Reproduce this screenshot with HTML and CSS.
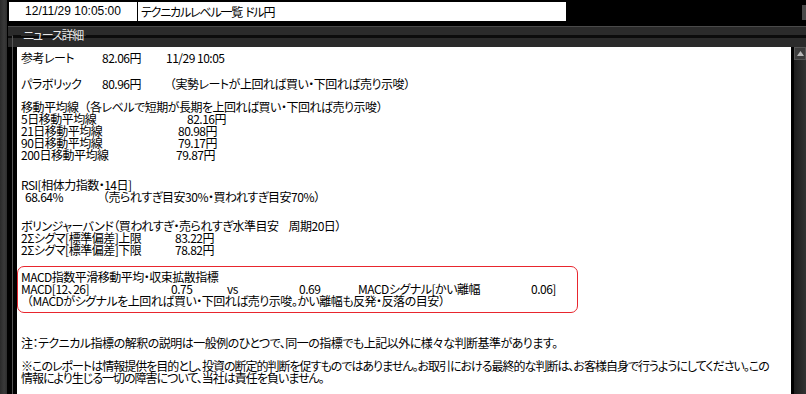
FILE: index.html
```html
<!DOCTYPE html>
<html lang="ja">
<head>
<meta charset="utf-8">
<title>テクニカルレベル一覧 ドル円</title>
<link rel="stylesheet" href="styles.css">
</head>
<body>
<div class="app">
  <div class="strip"></div>
  <div class="main">
    <div class="titlebar">
      <div class="datebox">12/11/29 10:05:00</div>
      <div class="titlebox">テクニカルレベル一覧&nbsp;&nbsp;ドル円</div>
      <div class="filler"></div>
      <div class="nub"></div>
    </div>
    <fieldset class="group">
      <legend class="legend">ニュース詳細</legend>
      <div class="panel-row">
        <div class="content">
          <div class="blk b-ref">
            <div class="ln"><span class="col w-lab">参考レート</span><span class="col w-val">82.06円</span><span>11/29 10:05</span></div>
          </div>
          <div class="blk b-para">
            <div class="ln"><span class="col w-lab">パラボリック</span><span class="col w-val2">80.96円</span><span><span class="fw">（</span>実勢レートが上回れば買い・下回れば売り示唆<span class="fw">）</span></span></div>
          </div>
          <div class="blk b-ma">
            <div class="ln">移動平均線<span class="fw">（</span>各レベルで短期が長期を上回れば買い・下回れば売り示唆<span class="fw">）</span></div>
            <div class="ln"><span class="col w-ma5">5日移動平均線</span><span>82.16円</span></div>
            <div class="ln"><span class="col w-ma21">21日移動平均線</span><span>80.98円</span></div>
            <div class="ln"><span class="col w-ma21">90日移動平均線</span><span>79.17円</span></div>
            <div class="ln"><span class="col w-ma200">200日移動平均線</span><span>79.87円</span></div>
          </div>
          <div class="blk b-rsi">
            <div class="ln">RSI[相体力指数・14日]</div>
            <div class="ln indent"><span class="col w-rsi">68.64%</span><span><span class="fw">（</span>売られすぎ目安30%・買われすぎ目安70%<span class="fw">）</span></span></div>
          </div>
          <div class="blk b-bb">
            <div class="ln">ボリンジャーバンド（買われすぎ・売られすぎ水準目安<span class="gap"></span>周期20日）</div>
            <div class="ln"><span class="col w-bb">2Σシグマ[標準偏差]上限</span><span>83.22円</span></div>
            <div class="ln"><span class="col w-bb">2Σシグマ[標準偏差]下限</span><span>78.82円</span></div>
          </div>
          <div class="blk b-macd">
            <div class="ln">MACD指数平滑移動平均・収束拡散指標</div>
            <div class="ln"><span class="col w-m1">MACD[12、26]</span><span class="col w-m2">0.75</span><span class="col w-m3">vs</span><span class="col w-m4">0.69</span><span class="col w-m5">MACDシグナル[かい離幅</span><span>0.06]</span></div>
            <div class="ln"><span class="fw">（</span>MACDがシグナルを上回れば買い・下回れば売り示唆。かい離幅も反発・反落の目安<span class="fw">）</span></div>
          </div>
          <div class="blk b-note">
            <div class="ln">注：テクニカル指標の解釈の説明は一般例のひとつで、同一の指標でも上記以外に様々な判断基準があります。</div>
          </div>
          <div class="blk b-disc">
            <div class="ln tight">※このレポートは情報提供を目的とし、投資の断定的判断を促すものではありません。お取引における最終的な判断は、お客様自身で行うようにしてください。この</div>
            <div class="ln tight">情報により生じる一切の障害について、当社は責任を負いません。</div>
          </div>
        </div>
        <div class="scrollbar">
          <div class="up-btn"><svg width="9" height="7" viewBox="0 0 9 7"><polygon points="4.5,1 8,6 1,6" fill="#b8b8b8"/></svg></div>
        </div>
      </div>
    </fieldset>
  </div>
</div>
</body>
</html>
```
FILE: styles.css
```css
* { box-sizing: border-box; }
html, body { margin: 0; padding: 0; }
body {
  width: 806px;
  height: 394px;
  overflow: hidden;
  background: #000;
  font-family: "Noto Sans CJK JP", sans-serif;
  font-size: 12px;
  font-feature-settings: "palt" 1;
}
.app {
  display: flex;
  height: 394px;
}
.strip {
  flex: none;
  width: 8px;
  background: linear-gradient(to right, #2a2a2a, #3a3a3a 60%, #2e2e2e);
  border-right: 1px solid #000;
}
.main {
  flex: 1;
  display: flex;
  flex-direction: column;
  min-width: 0;
  background: linear-gradient(to bottom,
    #000 0, #000 26px,
    #4a4a4a 26px, #4a4a4a 27px,
    #2b2b2b 27px, #2b2b2b 36px,
    #0c0c0c 36px, #0c0c0c 38px,
    #2b2b2b 38px, #2b2b2b 47px,
    #000 47px);
}
.titlebar {
  display: flex;
  height: 21px;
  padding: 2px 0 0 1px;
}
.datebox {
  width: 128px;
  height: 19px;
  background: #fff;
  color: #000;
  text-align: center;
  line-height: 19px;
  margin-right: 1px;
  font-family: "Liberation Sans", sans-serif;
}
.titlebox {
  width: 428px;
  height: 19px;
  background: #fff;
  color: #000;
  line-height: 19px;
  padding-left: 3px;
  letter-spacing: -1.2px;
}
.filler { flex: 1; }
.nub {
  width: 4px;
  height: 15px;
  margin-top: 3px;
  background: #4a4a4a;
}
.group {
  margin: 8px 0 0 4px;
  padding: 6px 0 0 4px;
  border: 0;
  border-left: 1px solid #555;
  border-top: 1px solid #0c0c0c;
  min-inline-size: 0;
  flex: 1;
  min-height: 0;
  display: flex;
  flex-direction: column;
}
.legend {
  color: #e8e8e8;
  line-height: 12px;
  height: 12px;
  padding: 0 3px 0 2px;
  margin-left: 4px;
  letter-spacing: -1.2px;
}
.panel-row {
  display: flex;
  flex: 1;
  min-height: 0;
}
.content {
  flex: 1;
  background: #fff;
  color: #000;
  padding: 5px 0 0 4px;
  overflow: hidden;
}
.ln {
  height: 12px;
  line-height: 12px;
  white-space: nowrap;
  letter-spacing: -0.5px;
}
.ln.tight { letter-spacing: -1px; }
.fw { font-feature-settings: normal; }
.col { display: inline-block; }
.w-lab { width: 81px; }
.w-val { width: 64px; }
.w-val2 { width: 62px; }
.w-ma5 { width: 166px; }
.w-ma21 { width: 157px; }
.w-ma200 { width: 155px; }
.indent { padding-left: 4px; }
.w-rsi { width: 72px; }
.w-bb { width: 154px; }
.gap { display: inline-block; width: 10px; }
.w-m1 { width: 150px; }
.w-m2 { width: 56px; }
.w-m3 { width: 72px; }
.w-m4 { width: 59px; }
.w-m5 { width: 173px; }

.b-para { margin-top: 14px; }
.b-ma { margin-top: 11px; }
.b-rsi { margin-top: 18px; }
.b-bb { margin-top: 17px; }
.b-macd {
  margin-top: 10px;
  margin-left: -4px;
  width: 561px;
  border: 1px solid #e8262e;
  border-radius: 7px;
  padding: 4px 0 5px 3px;
}
.b-note { margin-top: 24px; }
.b-disc { margin-top: 11px; }

.scrollbar {
  flex: none;
  width: 12px;
  margin-left: 3px;
  background: linear-gradient(to right, #1c1c1c, #333);
}
.up-btn {
  height: 13px;
  background: #3c3c3c;
  border: 1px solid #555;
  display: flex;
  align-items: center;
  justify-content: center;
}
```
